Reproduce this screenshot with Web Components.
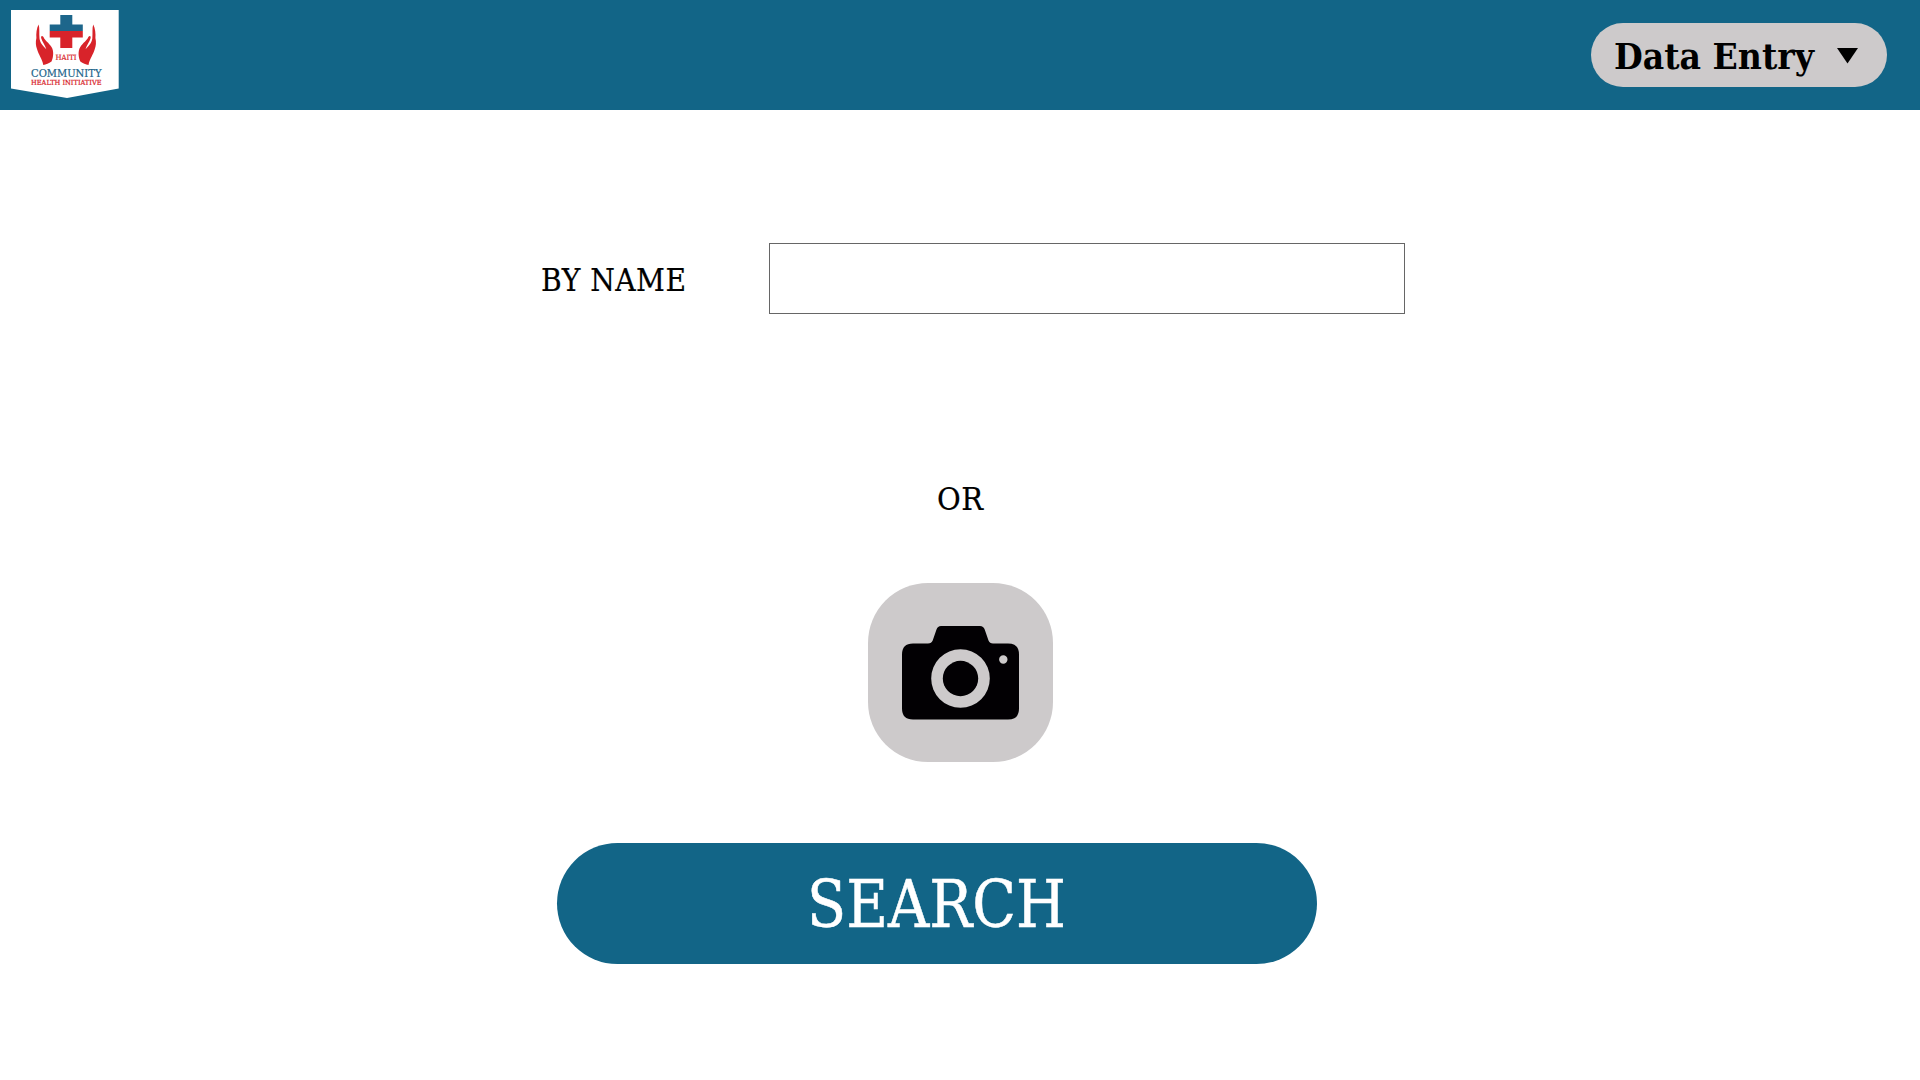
<!DOCTYPE html>
<html lang="en">
<head>
<meta charset="utf-8">
<title>Patient Search</title>
<style>
html,body{margin:0;height:100%;background:#fff;overflow:hidden}
body{font-family:"DejaVu Serif Condensed","DejaVu Serif",serif;color:#000}
</style>
</head>
<body>
<search-page></search-page>
<script>
const define = (name, html) => customElements.define(name, class extends HTMLElement {
  constructor() {
    super();
    this.attachShadow({ mode: 'open' }).innerHTML = html;
  }
});

// A single line of text set to an exact width; the box is as tall as its capitals.
customElements.define('fitted-text', class extends HTMLElement {
  connectedCallback() {
    const w = this.getAttribute('width'), s = this.getAttribute('size'), c = this.getAttribute('cap');
    const gap = this.getAttribute('gap') || 0, weight = this.getAttribute('weight') || 400;
    const stroke = this.getAttribute('stroke') || 0;
    this.attachShadow({ mode: 'open' }).innerHTML = `
      <style>:host{display:block;flex:none;width:${w}px;height:${c}px}svg{display:block;overflow:visible}
      text{font:${weight} ${s}px "DejaVu Serif Condensed","DejaVu Serif",serif;letter-spacing:${gap}px;fill:currentColor;stroke:currentColor;stroke-width:${stroke}px}</style>
      <svg width="${w}" height="${c}"><text y="${c}" textLength="${+w + +gap}" lengthAdjust="spacingAndGlyphs">${this.getAttribute('text')}</text></svg>`;
  }
});

define('brand-logo', `
<style>:host{display:block;flex:none;width:108px;height:88px}svg{display:block}
text{font-family:"DejaVu Serif Condensed","DejaVu Serif",serif;stroke-width:.2px}</style>
<svg width="108" height="88" viewBox="11 10 108 88">
  <path d="M11 10H118.700V88.500L67 98L11 88.500Z" fill="#fff"/>
  <path d="M60.300 15h12v9.500h10.500v6.500H49.700v-6.500h10.600z" fill="#1d668b"/>
  <path d="M49.700 31h33.100v6.500H72.300V48h-12V37.500H49.700z" fill="#d8232a"/>
  <path fill="#d8232a" d="M38.600 24.500C36.600 28 36 34 36.400 38C35.400 42 35.800 46 37 49C38.500 55 42 58 43.300 65C46 64.500 49 63.500 51.500 61.500C53.500 57 54 51 51.500 47C49 43 44.500 40 43.500 37C42 35 40.500 36 41.300 38.500C42.300 42 45 45 46.300 49.300C43 46 40 43 39.500 38.500C39 33 39.800 28 38.600 24.500Z"/>
  <path fill="#d8232a" transform="translate(131.800 0) scale(-1 1)" d="M38.600 24.500C36.600 28 36 34 36.400 38C35.400 42 35.800 46 37 49C38.500 55 42 58 43.300 65C46 64.500 49 63.500 51.500 61.500C53.500 57 54 51 51.500 47C49 43 44.500 40 43.500 37C42 35 40.500 36 41.300 38.500C42.300 42 45 45 46.300 49.300C43 46 40 43 39.500 38.500C39 33 39.800 28 38.600 24.500Z"/>
  <text x="55.500" y="59.800" font-size="7.300" textLength="21" lengthAdjust="spacingAndGlyphs" fill="#d8232a" stroke="#d8232a">HAITI</text>
  <text x="31" y="76.700" font-size="10.800" textLength="70.500" lengthAdjust="spacingAndGlyphs" fill="#1d668b" stroke="#1d668b">COMMUNITY</text>
  <text x="31" y="84.700" font-size="7.200" textLength="70.500" lengthAdjust="spacingAndGlyphs" fill="#d8232a" stroke="#d8232a">HEALTH INITIATIVE</text>
</svg>`);

define('mode-menu', `
<style>
:host{display:block;flex:none}
button{all:unset;box-sizing:border-box;display:flex;align-items:center;gap:23px;width:296px;height:64px;padding-left:23px;border-radius:32px;background:#cdcacb;color:#000}
svg{display:block;margin-top:2px}
fitted-text{margin-top:1px}
</style>
<button><fitted-text text="Data Entry" width="200" size="35.500" cap="26" gap="0" weight="700"></fitted-text>
<svg width="21" height="16"><path d="M0 0H21L10.500 15.500Z"/></svg></button>`);

define('top-bar', `
<style>
:host{display:flex;box-sizing:border-box;height:110px;background:#126587;justify-content:space-between;align-items:center;padding:0 33px 0 11px}
::slotted(brand-logo){margin-bottom:2px}
</style><slot></slot>`);

define('name-field', `
<style>
:host{display:flex;align-items:center;gap:83px;margin:133px 0 0 541px}
input{box-sizing:border-box;width:636px;height:71px;margin:0;border:1px solid #666;border-radius:0;background:#fff;padding:0 16px;font:28px "DejaVu Serif Condensed","DejaVu Serif",serif;outline:0}
fitted-text{margin-top:1px}
</style>
<fitted-text text="BY NAME" width="145" size="32" cap="23" gap=".5" stroke=".2"></fitted-text>
<input type="text" aria-label="By name">`);

define('camera-button', `
<style>
:host{display:block}
button{all:unset;box-sizing:border-box;display:flex;align-items:center;justify-content:center;width:185px;height:179px;border-radius:60px;background:#cdcacb}
svg{display:block}
</style>
<button aria-label="Camera"><svg width="117" height="94" viewBox="0 0 117 94">
<path fill="#020003" fill-rule="evenodd" d="M11 17.500H26Q29.500 17.500 30.700 14.500L34.500 3.500Q35.600 0 39 0H78Q81.500 0 82.700 3.500L86.500 14.500Q87.700 17.500 91 17.500H106Q117 17.500 117 28.500V82.500Q117 93.500 106 93.500H11Q0 93.500 0 82.500V28.500Q0 17.500 11 17.500ZM58.500 23.200A29.300 29.300 0 1 0 58.500 81.800A29.300 29.300 0 1 0 58.500 23.200ZM101.300 29.300A4.200 4.200 0 1 0 101.300 37.700A4.200 4.200 0 1 0 101.300 29.300Z"/>
<circle cx="58.500" cy="52.500" r="17.700" fill="#020003"/></svg></button>`);

define('search-button', `
<style>
:host{display:block}
button{all:unset;box-sizing:border-box;display:flex;align-items:center;width:760px;height:121px;padding-left:250px;border-radius:60.500px;background:#126587;color:#fff}
</style>
<button><fitted-text text="SEARCH" width="259" size="64.500" cap="47" gap="0" stroke=".5"></fitted-text></button>`);

define('search-page', `
<style>
:host{display:block;width:1920px;height:1080px;background:#fff}
main{display:flex;flex-direction:column;align-items:flex-start}
.or{margin:173px 0 0 937px}
camera-button{margin:73px 0 0 868px}
search-button{margin:81px 0 0 557px}
</style>
<top-bar><brand-logo></brand-logo><mode-menu></mode-menu></top-bar>
<main>
<name-field></name-field>
<fitted-text class="or" text="OR" width="46" size="32" cap="23" gap=".5" stroke=".2"></fitted-text>
<camera-button></camera-button>
<search-button></search-button>
</main>`);
</script>
</body>
</html>
